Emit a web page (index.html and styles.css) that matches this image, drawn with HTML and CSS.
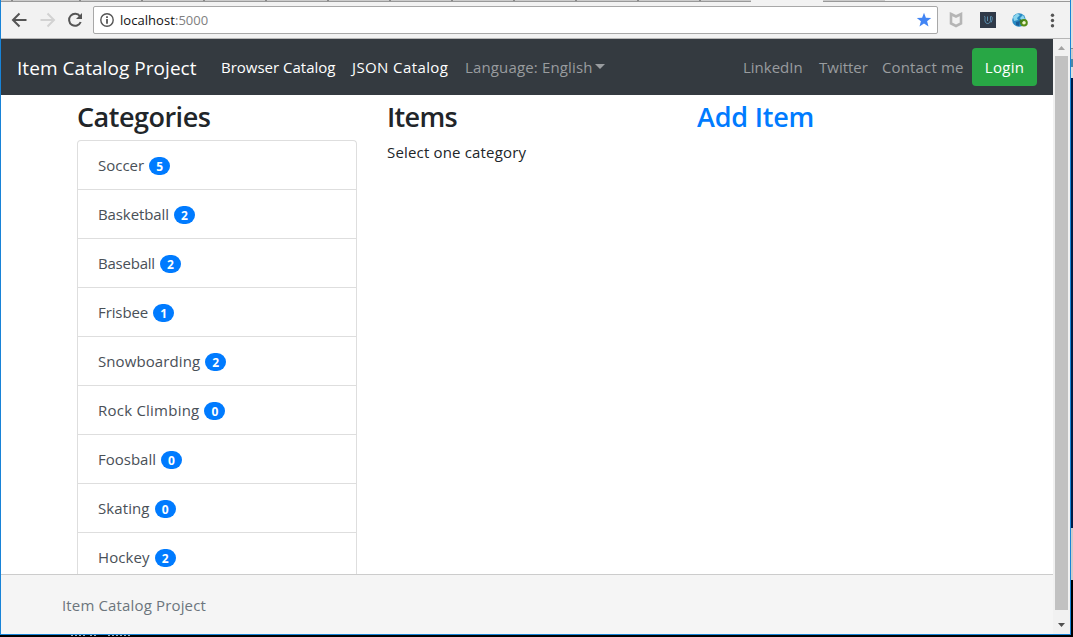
FILE: index.html
```
<!DOCTYPE html>
<html lang="en">
<head>
<meta charset="utf-8">
<title>Item Catalog Project</title>
<link rel="stylesheet" href="styles.css">
</head>
<body>
<div class="desktop">
  <div class="window">
    <div class="tabs"><i class="tab-group"></i><i class="tab-active"></i><i class="tab-new"></i></div>
    <div class="toolbar">
      <svg class="nav-icons" width="92" height="36" viewBox="0 0 92 36" fill="none">
        <path d="M25.500 18H12.500M18.500 11.500L12 18L18.500 24.500" stroke="#555" stroke-width="2"/>
        <path d="M39.500 18H52.500M46.500 11.500L53 18L46.500 24.500" stroke="#d2d2d2" stroke-width="2"/>
        <path d="M79 14.300A6 6 0 1 0 79.700 20" stroke="#555" stroke-width="2"/>
        <path d="M81 11V17H75Z" fill="#555"/>
      </svg>
      <div class="address">
        <svg width="14" height="14" viewBox="0 0 14 14"><circle cx="7" cy="7" r="6.200" fill="none" stroke="#555" stroke-width="1.400"/><path d="M6.100 3.300H7.900V4.900H6.100ZM6.100 6H7.900V10.700H6.100Z" fill="#555"/></svg>
        <span class="url">localhost<span class="port">:5000</span></span>
        <svg class="star" width="16" height="16" viewBox="0 0 16 16"><path d="M8 .8L9.900 5.700L15.200 6L11.100 9.300L12.500 14.500L8 11.600L3.500 14.500L4.900 9.300L.8 6L6.100 5.700Z" fill="#4285f4"/></svg>
      </div>
      <svg class="extensions" width="132" height="36" viewBox="938 2 132 36">
        <path d="M951 14L956 16.500L961 14V23.500L956 26L951 23.500Z" fill="none" stroke="#b5b5b5" stroke-width="2.600"/>
        <path d="M980 12H996V28H980Z" fill="#303a49"/>
        <path d="M984 16.500C986 16 984.500 19 985 21C985.600 24.500 990 24.500 990.500 20.500V16.500C993 15.500 992.500 20 991 22.500M987.500 16.500V21" fill="none" stroke="#5b91b2"/>
        <circle cx="1019" cy="20" r="6.800" fill="#298bc4"/>
        <path d="M1013 17L1017 13.500L1020 15L1017 18L1018 20L1014 21ZM1020 18L1023 15L1025 19L1022 21Z" fill="#8bd5ee"/>
        <path d="M1016 22L1020 21L1019 26L1016 25Z" fill="#1b5d97"/>
        <circle cx="1024" cy="22.700" r="2.800" fill="#eef3cc" stroke="#558d16" stroke-width="2"/>
        <path d="M1019.500 19.500L1024 20L1020.500 24Z" fill="#438018"/>
        <g fill="#555"><circle cx="1052.500" cy="15.300" r="1.700"/><circle cx="1052.500" cy="20.500" r="1.700"/><circle cx="1052.500" cy="25.700" r="1.700"/></g>
      </svg>
    </div>
    <div class="viewport">
      <div class="page">
        <nav class="navbar">
          <a class="brand">Item Catalog Project</a>
          <a class="link browser">Browser Catalog</a>
          <a class="link json">JSON Catalog</a>
          <a class="link muted language">Language: English</a><i class="caret"></i>
          <a class="link muted linkedin">LinkedIn</a>
          <a class="link muted twitter">Twitter</a>
          <a class="link muted contact">Contact me</a>
          <a class="login">Login</a>
        </nav>
        <main class="content">
          <section class="column">
            <h2 class="title categories">Categories</h2>
            <ul class="list">
              <li class="item"><span>Soccer</span><b class="badge">5</b></li>
              <li class="item tight"><span>Basketball</span><b class="badge">2</b></li>
              <li class="item tighter"><span>Baseball</span><b class="badge">2</b></li>
              <li class="item tight"><span>Frisbee</span><b class="badge">1</b></li>
              <li class="item loose"><span>Snowboarding</span><b class="badge">2</b></li>
              <li class="item looser"><span>Rock Climbing</span><b class="badge">0</b></li>
              <li class="item"><span>Foosball</span><b class="badge">0</b></li>
              <li class="item loose"><span>Skating</span><b class="badge">0</b></li>
              <li class="item loose"><span>Hockey</span><b class="badge">2</b></li>
            </ul>
          </section>
          <section class="column">
            <h2 class="title items">Items</h2>
            <p class="hint">Select one category</p>
          </section>
          <section class="column">
            <h2 class="title add">Add Item</h2>
          </section>
        </main>
        <footer class="footer"><span>Item Catalog Project</span></footer>
      </div>
      <div class="scrollbar">
        <svg width="17" height="17"><path d="M5 11H12L8.500 7Z" fill="#a3a3a3"/></svg>
        <div class="thumb"></div>
        <svg width="17" height="17"><path d="M5 6H12L8.500 10Z" fill="#505050"/></svg>
      </div>
    </div>
  </div>
  <div class="edge"></div>
  <svg class="behind" width="1071" height="2"><path d="M71 .5H86M90 .5H97M108 .5H131" stroke="#aaa" stroke-dasharray="2 2"/></svg>
</div>
</body>
</html>
```
FILE: styles.css
```
* { box-sizing: border-box; }
body { margin: 0; font-family: "Open Sans", "Noto Sans", sans-serif; font-size: 15px; color: #212529; }
h2, p, ul { margin: 0; padding: 0; }
svg { display: block; flex: none; }
.desktop { width: 1073px; height: 637px; display: grid; grid-template: 635px 2px / 1071px 2px; background: #000; overflow: hidden; }
.window { display: flex; flex-direction: column; border: solid #1883d7; border-width: 0 1px 1px; background: #f2f2f2; overflow: hidden; }
.tabs { height: 2px; flex: none; display: flex; border-bottom: 1px solid #999; }
.tab-group { width: 750px; height: 1px; background: repeating-linear-gradient(90deg, #ccc 0 60px, #888 60px 62px); background-position: 18px 0; }
.tab-active { width: 72px; height: 2px; background: #f2f2f2; }
.tab-new { width: 62px; height: 1px; background: #ccc; }
.toolbar { height: 37px; flex: none; display: flex; border-bottom: 1px solid #b6b6b6; }
.address { width: 845px; height: 28px; margin-top: 4px; display: flex; align-items: center; padding: 0 5px 0 6px; background: #fff; border: 1px solid #a8a8a8; border-radius: 2px; }
.url { margin-left: 6px; font-size: 13px; letter-spacing: .05px; color: #111; }
.port { color: #808080; }
.star { margin-left: auto; }
.viewport { flex: 1; min-height: 0; display: flex; }
.page { width: 1052px; display: flex; flex-direction: column; background: #fff; }
.navbar { height: 56px; flex: none; display: flex; align-items: center; padding: 0 16px; background: #343a40; color: #fff; white-space: nowrap; }
.brand { width: 204px; font-size: 19px; letter-spacing: .05px; padding-top: 2px; }
.link { letter-spacing: 0; }
.browser { width: 131px; }
.json { width: 113px; letter-spacing: .4px; }
.muted { color: #999c9f; }
.language { width: 130px; letter-spacing: .15px; }
.caret { margin-bottom: 2px; border: solid transparent; border-width: 5px 5px 0; border-top-color: #999c9f; }
.linkedin { width: 76px; margin-left: auto; }
.twitter { width: 63px; }
.contact { width: 90px; letter-spacing: .15px; }
.login { width: 65px; height: 38px; line-height: 38px; text-align: center; letter-spacing: .3px; background: #28a745; border-radius: 4px; }
.content { flex: 1; min-height: 0; display: grid; grid-template-columns: repeat(3, 280px); column-gap: 30px; padding: 5px 0 0 76px; overflow: hidden; }
.column { height: 474px; overflow: hidden; }
.title { height: 40px; line-height: 34px; font-size: 27px; font-weight: 600; letter-spacing: -.5px; }
.items { letter-spacing: -.7px; }
.add { color: #007bff; letter-spacing: -.2px; }
.list { list-style: none; border: 1px solid #dedede; border-bottom: 0; border-radius: 4px 4px 0 0; }
.item { height: 49px; display: flex; align-items: center; gap: 5px; padding: 1px 20px 0; border-bottom: 1px solid #dedede; color: #495057; }
.item span { padding-bottom: 2px; }
.tight { letter-spacing: -.1px; }
.tighter { letter-spacing: -.22px; }
.loose { letter-spacing: .1px; }
.looser { letter-spacing: .23px; }
.badge { width: 21px; height: 18px; line-height: 19px; text-align: center; font-size: 12px; letter-spacing: 0; color: #fff; background: #007bff; border-radius: 9px; }
.hint { line-height: 24px; letter-spacing: .17px; }
.footer { height: 60px; flex: none; line-height: 60px; padding-left: 61px; letter-spacing: .15px; background: #f5f5f5; border-top: 1px solid #ccc; color: #6c757d; }
.scrollbar { width: 17px; display: flex; flex-direction: column; background: #f1f1f1; }
.thumb { flex: 1; margin: 0 2px 7px; background: #c1c1c1; }
.edge { background: linear-gradient(#ddd 0 48px, #888 48px 49px, #ccc 49px 59px, #4c87a5 59px 67px, #ddd 67px 78px, #001c47 78px 528px, #ccc 528px 580px, #000 580px); }
```
